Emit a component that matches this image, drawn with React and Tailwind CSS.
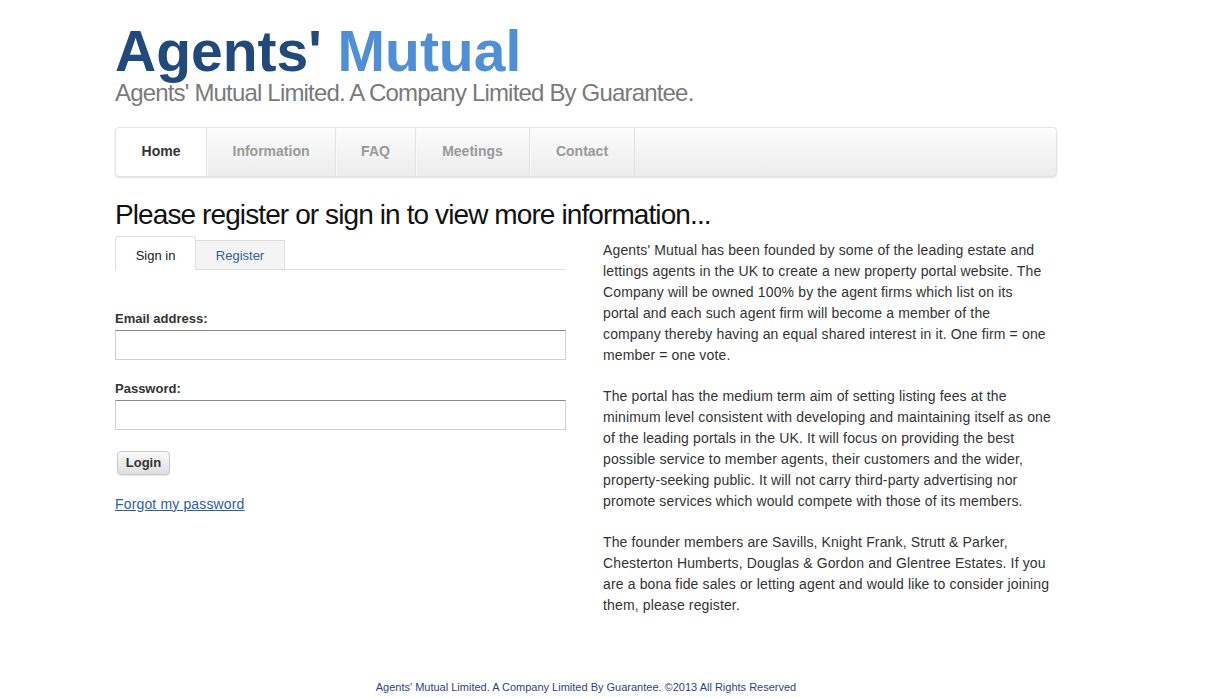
import React from "react";

const navItems = [
  { label: "Home", w: "w-[91px]" },
  { label: "Information", w: "w-[129px]" },
  { label: "FAQ", w: "w-[80px]" },
  { label: "Meetings", w: "w-[114px]" },
  { label: "Contact", w: "w-[105px]" },
];

export default function App() {
  return (
    <div className="min-h-[698px] bg-white font-['Liberation_Sans',Arial,sans-serif] text-[#333]">
      <div className="ml-[115px] w-[942px] pt-[23px]">
        <h1 className="text-[57px] font-bold leading-none">
          <span className="text-[#21497c]">Agents'</span>{" "}
          <span className="text-[#4f8fd7]">Mutual</span>
        </h1>
        <div className="mt-[1px] text-[24px] leading-none tracking-[-0.82px] text-[#7a7a7a]">
          Agents' Mutual Limited. A Company Limited By Guarantee.
        </div>

        <nav className="mt-[22px] flex h-[50px] rounded-[4px] border border-[#e3e3e3] bg-gradient-to-b from-[#fdfdfd] to-[#ececec] shadow-[0_1px_2px_rgba(0,0,0,0.12)]">
          {navItems.map((item, i) => (
            <a
              key={item.label}
              className={
                i === 0
                  ? "flex w-[91px] items-center justify-center rounded-l-[4px] border-r border-[#e2e2e2] bg-white pb-px text-[14px] font-bold text-[#333]"
                  : item.w === "w-[129px]"
                  ? "flex w-[129px] items-center justify-center border-r border-[#e2e2e2] pb-px text-[14px] font-bold text-[#999] shadow-[inset_1px_0_0_#fafafa]"
                  : item.w === "w-[80px]"
                  ? "flex w-[80px] items-center justify-center border-r border-[#e2e2e2] pb-px text-[14px] font-bold text-[#999] shadow-[inset_1px_0_0_#fafafa]"
                  : item.w === "w-[114px]"
                  ? "flex w-[114px] items-center justify-center border-r border-[#e2e2e2] pb-px text-[14px] font-bold text-[#999] shadow-[inset_1px_0_0_#fafafa]"
                  : "flex w-[105px] items-center justify-center border-r border-[#e2e2e2] pb-px text-[14px] font-bold text-[#999] shadow-[inset_1px_0_0_#fafafa]"
              }
            >
              {item.label}
            </a>
          ))}
        </nav>

        <h2 className="mt-[21px] text-[28px] leading-[1.2] tracking-[-0.9px] text-[#111]">
          Please register or sign in to view more information...
        </h2>

        <div className="mt-[5px] flex">
          <div className="w-[451px]">
            <div className="flex h-[33px] items-end border-b border-[#ddd]">
              <div className="-mb-px flex h-[34px] w-[81px] items-center justify-center rounded-t-[3px] border border-b-white border-[#ddd] bg-white pt-[6px] text-[13px] text-[#222]">
                Sign in
              </div>
              <div className="flex h-[29px] w-[89px] items-center justify-center border border-b-0 border-l-0 border-[#ddd] bg-[#f4f4f4] pt-[2px] text-[13px] text-[#3a5b9a]">
                Register
              </div>
            </div>

            <div className="pt-[41px]">
              <label className="block text-[13px] font-bold leading-[16px] text-[#333]">
                Email address:
              </label>
              <input
                type="text"
                className="mt-[3px] block h-[30px] w-[451px] border border-[#cfcfcf] border-t-[#8a8a8a] bg-white"
              />
              <label className="mt-[21px] block text-[13px] font-bold leading-[16px] text-[#333]">
                Password:
              </label>
              <input
                type="password"
                className="mt-[3px] block h-[30px] w-[451px] border border-[#cfcfcf] border-t-[#8a8a8a] bg-white"
              />
              <button className="ml-[2px] mt-[21px] block h-[24px] w-[53px] rounded-[4px] border border-[#c8c8c8] bg-gradient-to-b from-[#fafafa] to-[#dedede] text-[13px] font-bold text-[#333] shadow-[0_1px_1px_rgba(0,0,0,0.1)]">
                Login
              </button>
              <a className="mt-[20px] block text-[14px] leading-[18px] tracking-[0.15px] text-[#2a5ea8] underline">
                Forgot my password
              </a>
            </div>
          </div>

          <div className="ml-[37px] w-[449px] pt-[3px] text-[14px] leading-[21px] tracking-[0.14px] text-[#333]">
            <p className="mb-[20px]">
              Agents' Mutual has been founded by some of the leading estate and lettings agents in the UK to create a new property portal website. The Company will be owned 100% by the agent firms which list on its portal and each such agent firm will become a member of the company thereby having an equal shared interest in it. One firm = one member = one vote.
            </p>
            <p className="mb-[20px]">
              The portal has the medium term aim of setting listing fees at the minimum level consistent with developing and maintaining itself as one of the leading portals in the UK. It will focus on providing the best possible service to member agents, their customers and the wider, property-seeking public. It will not carry third-party advertising nor promote services which would compete with those of its members.
            </p>
            <p>
              The founder members are Savills, Knight Frank, Strutt &amp; Parker, Chesterton Humberts, Douglas &amp; Gordon and Glentree Estates. If you are a bona fide sales or letting agent and would like to consider joining them, please register.
            </p>
          </div>
        </div>

        <footer className="mt-[64px] text-center text-[11px] leading-[14px] text-[#2c3f8c]">
          Agents' Mutual Limited. A Company Limited By Guarantee. ©2013 All Rights Reserved
        </footer>
      </div>
    </div>
  );
}
